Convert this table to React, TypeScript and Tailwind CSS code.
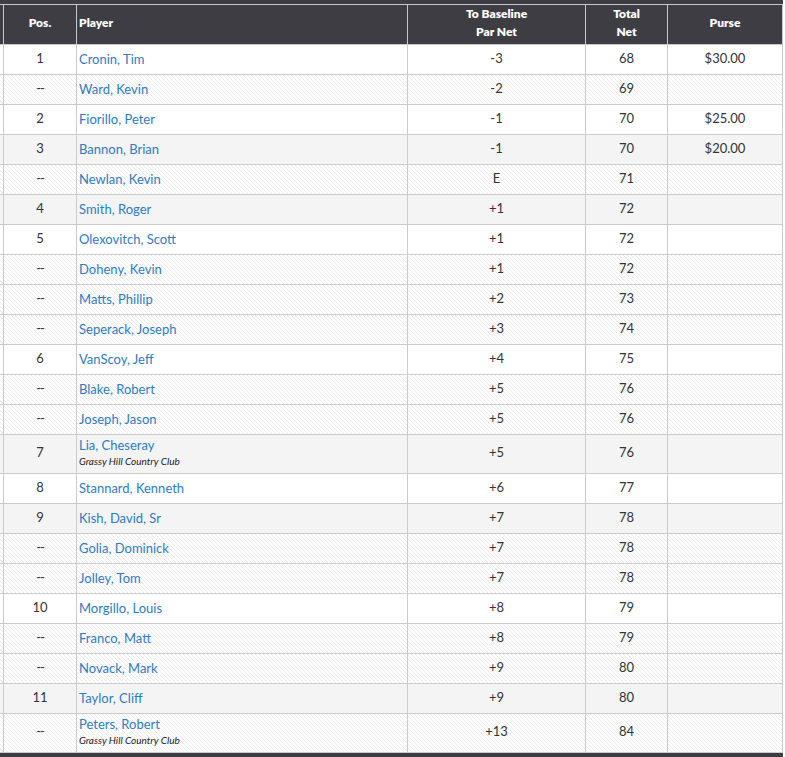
import React from "react";

type Row = { pos: string; name: string; club?: string; par: string; total: string; purse?: string; bg: "w" | "g" | "h" };

const rows: Row[] = [
  { pos: "1", name: "Cronin, Tim", par: "-3", total: "68", purse: "$30.00", bg: "w" },
  { pos: "--", name: "Ward, Kevin", par: "-2", total: "69", bg: "h" },
  { pos: "2", name: "Fiorillo, Peter", par: "-1", total: "70", purse: "$25.00", bg: "w" },
  { pos: "3", name: "Bannon, Brian", par: "-1", total: "70", purse: "$20.00", bg: "g" },
  { pos: "--", name: "Newlan, Kevin", par: "E", total: "71", bg: "h" },
  { pos: "4", name: "Smith, Roger", par: "+1", total: "72", bg: "g" },
  { pos: "5", name: "Olexovitch, Scott", par: "+1", total: "72", bg: "w" },
  { pos: "--", name: "Doheny, Kevin", par: "+1", total: "72", bg: "h" },
  { pos: "--", name: "Matts, Phillip", par: "+2", total: "73", bg: "h" },
  { pos: "--", name: "Seperack, Joseph", par: "+3", total: "74", bg: "h" },
  { pos: "6", name: "VanScoy, Jeff", par: "+4", total: "75", bg: "w" },
  { pos: "--", name: "Blake, Robert", par: "+5", total: "76", bg: "h" },
  { pos: "--", name: "Joseph, Jason", par: "+5", total: "76", bg: "h" },
  { pos: "7", name: "Lia, Cheseray", club: "Grassy Hill Country Club", par: "+5", total: "76", bg: "g" },
  { pos: "8", name: "Stannard, Kenneth", par: "+6", total: "77", bg: "w" },
  { pos: "9", name: "Kish, David, Sr", par: "+7", total: "78", bg: "g" },
  { pos: "--", name: "Golia, Dominick", par: "+7", total: "78", bg: "h" },
  { pos: "--", name: "Jolley, Tom", par: "+7", total: "78", bg: "h" },
  { pos: "10", name: "Morgillo, Louis", par: "+8", total: "79", bg: "w" },
  { pos: "--", name: "Franco, Matt", par: "+8", total: "79", bg: "h" },
  { pos: "--", name: "Novack, Mark", par: "+9", total: "80", bg: "h" },
  { pos: "11", name: "Taylor, Cliff", par: "+9", total: "80", bg: "g" },
  { pos: "--", name: "Peters, Robert", club: "Grassy Hill Country Club", par: "+13", total: "84", bg: "h" },
];

const bgClass = {
  w: "bg-white",
  g: "bg-[#f4f4f4]",
  h: "bg-[repeating-linear-gradient(45deg,#ffffff_0px,#ffffff_2.12px,#ececec_2.12px,#ececec_2.83px)]",
};

const grid = "grid grid-cols-[3px_73px_331px_178px_82px_116px]";

export default function App() {
  return (
    <div className="w-[785px] h-[757px] bg-white overflow-hidden font-['Lato','Open_Sans',sans-serif] text-[13px] text-[#333]">
      <div className="w-[783px]">
        <div className="h-[4px] bg-[#3e3d43]" />
        <div className={`${grid} h-[41px] bg-[#3e3d43] border-y border-[#c8c8c8] text-white font-extrabold text-[12px] leading-[18px]`}>
          <div />
          <div className="border-l border-[#c8c8c8] flex items-center justify-center pb-[3px]">Pos.</div>
          <div className="border-l border-[#c8c8c8] flex items-center pl-[2px] pb-[3px]">Player</div>
          <div className="border-l border-[#c8c8c8] flex items-center justify-center text-center pb-[3px]">
            To Baseline
            <br />
            Par Net
          </div>
          <div className="border-l border-[#c8c8c8] flex items-center justify-center text-center pb-[3px]">
            Total
            <br />
            Net
          </div>
          <div className="border-x border-[#c8c8c8] flex items-center justify-center pb-[3px]">Purse</div>
        </div>
        {rows.map((r, i) => (
          <div
            key={i}
            className={`${grid} ${r.club ? "h-[39px]" : "h-[30px]"} border-b border-[#cbcbcb] ${bgClass[r.bg]}`}
          >
            <div />
            <div className={`border-l border-[#cbcbcb] flex items-center justify-center pb-[2px] ${r.pos === "--" ? "tracking-[-1px]" : ""}`}>{r.pos}</div>
            <div className="border-l border-[#cbcbcb] flex flex-col justify-center pl-[2px] pb-[2px]">
              <span className="text-[#2f7bbf] leading-[16px]">{r.name}</span>
              {r.club && (
                <span className="italic text-[10px] leading-[16px] text-[#222]">{r.club}</span>
              )}
            </div>
            <div className="border-l border-[#cbcbcb] flex items-center justify-center pb-[2px]">{r.par}</div>
            <div className="border-l border-[#cbcbcb] flex items-center justify-center pb-[2px]">{r.total}</div>
            <div className="border-x border-[#cbcbcb] flex items-center justify-center pb-[2px]">{r.purse ?? ""}</div>
          </div>
        ))}
        <div className="h-[4px] bg-[#3e3d43]" />
      </div>
    </div>
  );
}
